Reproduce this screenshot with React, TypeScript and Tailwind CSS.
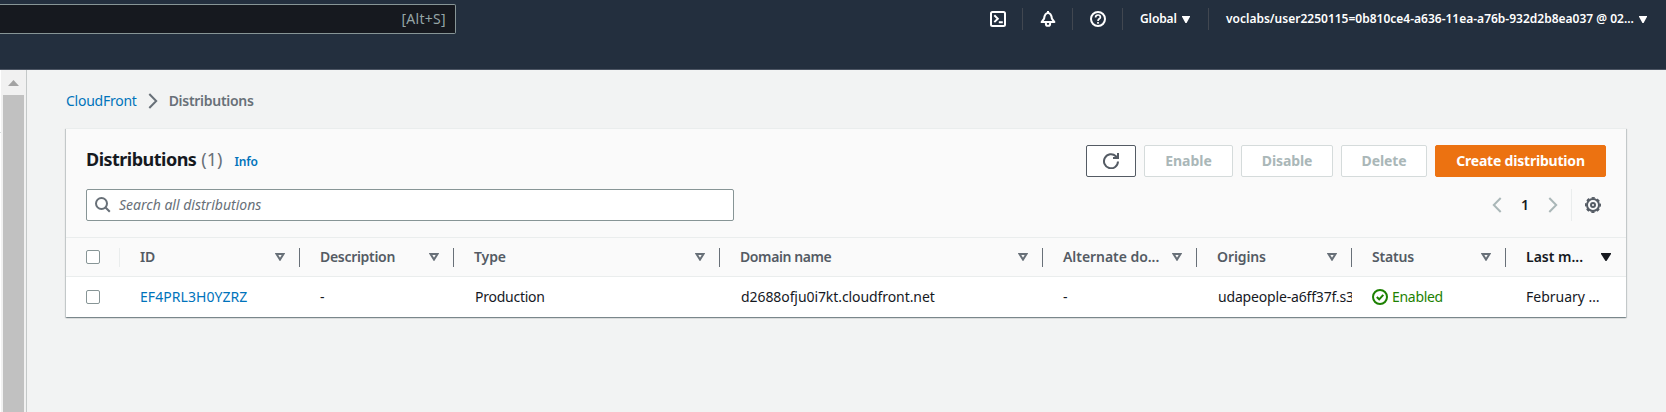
import React from "react";

function NavIcon({ children }: { children: React.ReactNode }) {
  return (
    <div className="flex h-[22px] w-[50px] items-center border-r border-[#414750] pl-[17px]">
      <svg viewBox="0 0 16 16" className="size-4 fill-none stroke-white stroke-2">
        {children}
      </svg>
    </div>
  );
}

function NavCaret() {
  return (
    <svg viewBox="0 0 8 7" className="h-[7px] w-2 shrink-0 fill-white">
      <path d="M0 0h8v0.8L4.6 7H3.4L0 0.8z" />
    </svg>
  );
}

function TopNav() {
  return (
    <header className="flex h-[70px] items-start border-b border-[#4c5563] bg-[#232f3e] text-white">
      <div className="mt-1 flex h-[30px] w-[456px] shrink-0 items-center justify-end rounded-r-[2px] border border-l-0 border-[#879596] bg-[#16191f] pr-[9px] text-sm tracking-[0.3px] text-[#95a5a6]">
        [Alt+S]
      </div>
      <nav className="mt-2 ml-[517px] flex h-[22px] items-center text-xs font-semibold">
        <NavIcon>
          <rect x="1" y="1" width="14" height="14" rx="1.5" />
          <path d="M4.3 4.3 7.8 7.7 4.3 11.1M8.8 11.2h4" />
        </NavIcon>
        <NavIcon>
          <path d="M1.6 11.1h12.8L11.9 7.6C11.5 4 10.6 1.9 8 1.9S4.5 4 4.1 7.6z" strokeLinejoin="round" />
          <path d="M5.9 11.6v1.3c0 1 .9 1.9 2.1 1.9s2.1-.9 2.1-1.900v-1.300M8 0v2" />
        </NavIcon>
        <NavIcon>
          <circle cx="8" cy="8" r="7" />
          <path d="M5.6 6.4C5.6 4.9 6.6 4 8 4s2.4.9 2.4 2.2C10.4 7.8 8 7.8 8 9.9M8 11v1.8" strokeWidth="1.7" />
        </NavIcon>
        <div className="flex h-[22px] w-[86px] items-center justify-between border-r border-[#414750] pr-[18px] pl-[17px]">
          <span className="tracking-[-0.1px]">Global</span>
          <NavCaret />
        </div>
        <div className="flex items-center gap-[5px] pl-[17px]">
          <span className="whitespace-nowrap">
            voclabs/user2250115=0b810ce4-a636-11ea-a76b-932d2b8ea037 @ 02...
          </span>
          <NavCaret />
        </div>
      </nav>
    </header>
  );
}

function Scrollbar() {
  return (
    <aside className="flex w-[27px] shrink-0 border-r border-[#c4c8c8] bg-[#f1f1f1]">
      <div className="w-px bg-white pt-[62px]">
        <div className="h-px bg-[#d5dbdb]" />
      </div>
      <div className="ml-[2px] flex w-[21px] flex-col items-center">
        <svg viewBox="0 0 11 6" className="mt-[10px] h-[6px] w-[11px] shrink-0 fill-[#a3a3a3]">
          <path d="M5.5 0 11 6H0z" />
        </svg>
        <div className="mt-[9px] w-full grow bg-[#c1c1c1]" />
      </div>
    </aside>
  );
}

function Button({ className, children }: { className: string; children: React.ReactNode }) {
  return (
    <button
      className={`flex h-8 items-center justify-center rounded-[2px] border text-sm font-bold whitespace-nowrap ${className}`}
    >
      {children}
    </button>
  );
}

const disabled = "border-[#d5dbdb] bg-white text-[#aab7b8]";

function Checkbox() {
  return <span className="block size-[14px] rounded-[2px] border border-[#879596] bg-white" />;
}

function SortIcon({ active }: { active?: boolean }) {
  return (
    <svg viewBox="0 0 10 8" className="h-2 w-[10px] shrink-0">
      {active ? (
        <path d="M0 0h10v1L5.5 8h-1L0 1z" className="fill-[#16191f]" />
      ) : (
        <path d="M1.5 1h7L5 6.6z" className="fill-none stroke-[#687078] stroke-2" />
      )}
    </svg>
  );
}

const columns = [
  { label: "ID", track: "tracking-[-0.3px]" },
  { label: "Description", track: "tracking-[-0.3px]" },
  { label: "Type", track: "tracking-[-0.1px]" },
  { label: "Domain name", track: "tracking-[-0.4px]" },
  { label: "Alternate do...", track: "tracking-[-0.05px]" },
  { label: "Origins", track: "tracking-[-0.1px]" },
  { label: "Status", track: "tracking-[-0.2px]" },
  { label: "Last m...", track: "tracking-normal", active: true },
];

const grid = "grid grid-cols-[54px_180px_154px_266px_323px_154px_155px_154px_120px] items-center";

function DistributionsTable() {
  return (
    <div className="text-sm text-[#16191f]">
      <div className={`${grid} h-10 border-y border-[#eaeded] font-semibold text-[#545b64]`}>
        <div className="flex h-[19px] items-center border-r border-[#eaeded] pl-5">
          <Checkbox />
        </div>
        {columns.map((c) => (
          <div
            key={c.label}
            className={`flex h-[19px] items-center justify-between pl-5 ${
              c.active ? "pr-[15px] text-[#16191f]" : "border-r border-[#687078] pr-[14px]"
            }`}
          >
            <span className={`whitespace-nowrap ${c.track}`}>{c.label}</span>
            <SortIcon active={c.active} />
          </div>
        ))}
      </div>
      <div className={`${grid} h-10 bg-white whitespace-nowrap`}>
        <div className="pl-5">
          <Checkbox />
        </div>
        <a className="pl-5 tracking-[0.06px] text-[#0073bb]">EF4PRL3H0YZRZ</a>
        <span className="pl-5">-</span>
        <span className="pl-[21px] tracking-[-0.25px]">Production</span>
        <span className="pl-[21px] tracking-[-0.08px]">d2688ofju0i7kt.cloudfront.net</span>
        <span className="pl-5">-</span>
        <span className="overflow-hidden pl-[21px] tracking-[-0.17px]">udapeople-a6ff37f.s3</span>
        <span className="flex items-center gap-1 pl-5 tracking-[-0.3px] text-[#1d8102]">
          <svg viewBox="0 0 16 16" className="size-4 fill-none stroke-[#1d8102] stroke-2">
            <circle cx="8" cy="8" r="7" />
            <path d="M4.8 8 7.2 10.3 11.3 5.8" />
          </svg>
          Enabled
        </span>
        <span className="pl-5">February …</span>
      </div>
    </div>
  );
}

function Gear() {
  return (
    <svg viewBox="0 0 16 16" className="size-4 fill-none stroke-[#545b64]">
      <circle cx="8" cy="8" r="6" strokeWidth="2" />
      <circle cx="8" cy="8" r="7.2" strokeWidth="1.6" strokeDasharray="3.2 2.455" strokeDashoffset="1.6" />
      <circle cx="8" cy="8" r="2" strokeWidth="2" />
    </svg>
  );
}

export default function App() {
  return (
    <div className="flex h-[412px] w-[1666px] flex-col overflow-hidden bg-[#f2f3f3] font-['Noto_Sans',sans-serif]">
      <TopNav />
      <div className="flex grow">
        <Scrollbar />
        <main className="pt-5 pl-[39px]">
          <div className="flex h-[22px] items-center text-sm">
            <a className="tracking-[-0.25px] text-[#0073bb]">CloudFront</a>
            <svg viewBox="0 0 10 16" className="ml-[11px] h-4 w-[10px] fill-none stroke-[#687078] stroke-2">
              <path d="M1.3 1 8.2 8 1.3 15" />
            </svg>
            <span className="ml-[11px] font-semibold tracking-[-0.28px] text-[#687078]">Distributions</span>
          </div>

          <section className="mt-4 w-[1560px] border-t border-[#eaeded] bg-[#fafafa] shadow-[0_1px_1px_0_rgba(0,28,36,0.3),1px_1px_1px_0_rgba(0,28,36,0.15),-1px_1px_1px_0_rgba(0,28,36,0.15)]">
            <div className="flex h-12 items-end justify-between px-5">
              <div className="flex h-8 items-baseline">
                <h1 className="text-lg font-bold tracking-[-0.52px] text-[#16191f]">Distributions</h1>
                <span className="ml-[5px] text-lg text-[#687078]">(1)</span>
                <a className="ml-3 text-xs font-semibold tracking-[-0.2px] text-[#0073bb]">Info</a>
              </div>
              <div className="flex gap-2">
                <Button className="w-[50px] border-[#545b64] bg-white">
                  <svg viewBox="0 0 16 16" className="size-4 fill-none stroke-[#545b64] stroke-2">
                    <path d="M15 8.5A7 7 0 1 1 12.9 3.3L14.7 5" />
                    <path d="M15 0v5H10" />
                  </svg>
                </Button>
                <Button className={`w-[89px] ${disabled}`}>Enable</Button>
                <Button className={`w-[92px] tracking-[-0.1px] ${disabled}`}>Disable</Button>
                <Button className={`w-[86px] tracking-[-0.1px] ${disabled}`}>Delete</Button>
                <Button className="w-[171px] border-[#ec7211] bg-[#ec7211] tracking-[-0.2px] text-white">
                  Create distribution
                </Button>
              </div>
            </div>

            <div className="mt-3 flex h-8 items-center justify-between pl-5">
              <div className="flex h-8 w-[648px] items-center rounded-[2px] border border-[#879596] bg-white pl-2">
                <svg viewBox="0 0 16 16" className="size-4 fill-none stroke-[#687078] stroke-2">
                  <circle cx="6.5" cy="6.5" r="5.5" />
                  <path d="m10.5 10.5 4.300 4.300" />
                </svg>
                <span className="ml-2 text-sm text-[#687078] italic">Search all distributions</span>
              </div>
              <div className="flex h-8 items-center pr-[25px]">
                <svg viewBox="0 0 10 16" className="h-4 w-[10px] fill-none stroke-[#aab7b8] stroke-2">
                  <path d="M8.7 1 1.8 8 8.7 15" />
                </svg>
                <span className="w-[46px] text-center text-sm font-semibold text-[#16191f]">1</span>
                <svg viewBox="0 0 10 16" className="h-4 w-[10px] fill-none stroke-[#aab7b8] stroke-2">
                  <path d="M1.3 1 8.2 8 1.3 15" />
                </svg>
                <div className="ml-[13px] flex h-8 items-center border-l border-[#eaeded] pl-[13px]">
                  <Gear />
                </div>
              </div>
            </div>

            <div className="mt-4">
              <DistributionsTable />
            </div>
          </section>
        </main>
      </div>
    </div>
  );
}
